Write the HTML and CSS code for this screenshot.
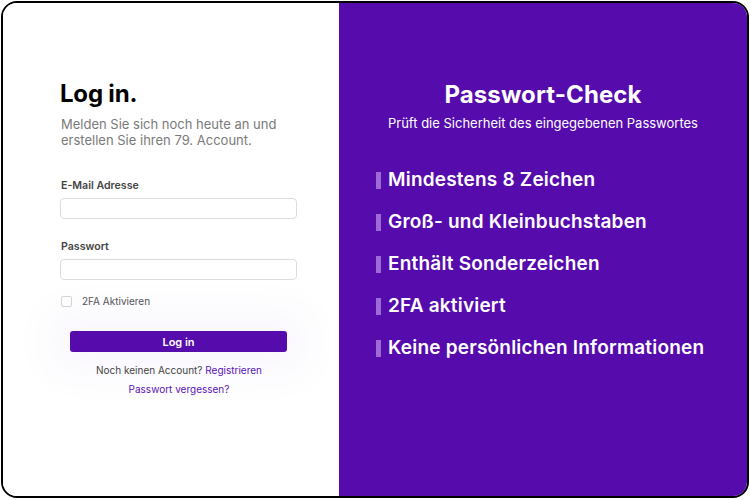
FILE: index.html
```html
<!DOCTYPE html>
<html lang="de">
<head>
<meta charset="utf-8">
<title>Log in</title>
<link rel="stylesheet" href="styles.css">
</head>
<body>
<div class="frame">
  <section class="left">
    <h1 class="title">Log in.</h1>
    <p class="intro">Melden Sie sich noch heute an und erstellen Sie ihren 79. Account.</p>
    <label class="label label-first">E-Mail Adresse</label>
    <input class="field" type="text">
    <label class="label label-second">Passwort</label>
    <input class="field" type="password">
    <div class="check-row">
      <span class="checkbox"></span>
      <span class="check-label">2FA Aktivieren</span>
    </div>
    <button class="btn">Log in</button>
    <p class="links">Noch keinen Account? <a class="link">Registrieren</a></p>
    <p class="links links-second"><a class="link">Passwort vergessen?</a></p>
  </section>
  <section class="right">
    <h2 class="check-title">Passwort-Check</h2>
    <p class="check-sub">Prüft die Sicherheit des eingegebenen Passwortes</p>
    <ul class="rules">
      <li class="rule"><span class="bar"></span>Mindestens 8 Zeichen</li>
      <li class="rule"><span class="bar"></span>Groß- und Kleinbuchstaben</li>
      <li class="rule"><span class="bar"></span>Enthält Sonderzeichen</li>
      <li class="rule"><span class="bar"></span>2FA aktiviert</li>
      <li class="rule"><span class="bar"></span>Keine persönlichen Informationen</li>
    </ul>
  </section>
</div>
</body>
</html>
```

FILE: styles.css
```css
* { box-sizing: border-box; }
html, body { margin: 0; padding: 0; background: #fff; }
body { font-family: Inter, "Noto Sans", sans-serif; }

.frame {
  margin: 1px 1px 0 1px;
  width: 748px;
  height: 497px;
  border: 2px solid #000;
  border-radius: 16px;
  overflow: hidden;
  display: flex;
}

.left {
  width: 336px;
  flex: none;
  background: #fff;
  padding: 76px 0 0 57px;
  display: flex;
  flex-direction: column;
  align-items: flex-start;
}
.left > * { width: 237px; }

.title {
  margin: 0;
  font-size: 24px;
  line-height: 30px;
  font-weight: 700;
  color: #000;
  letter-spacing: -0.2px;
}
.intro {
  margin: 7px 0 0 1px;
  font-size: 13px;
  line-height: 16px;
  color: #7a7a7a;
  width: 230px;
}
.label {
  display: block;
  font-size: 10.6px;
  line-height: 14px;
  font-weight: 600;
  color: #444;
  margin-left: 1px;
}
.label-first { margin-top: 31px; }
.label-second { margin-top: 21px; }
.field {
  margin: 5px 0 0 0;
  height: 21px;
  border: 1px solid #dcdcdc;
  border-radius: 4px;
  background: #fff;
  padding: 0 6px;
}
.check-row {
  margin-top: 15px;
  display: flex;
  align-items: center;
  gap: 10px;
  height: 12px;
  margin-left: 1px;
}
.checkbox {
  width: 11px;
  height: 11px;
  border: 1px solid #d6d6d6;
  border-radius: 2px;
  flex: none;
}
.check-label {
  font-size: 10px;
  color: #555;
}
.btn {
  margin: 24px 0 0 10px;
  width: 217px;
  height: 21px;
  border: none;
  border-radius: 3px;
  background: #560bad;
  color: #fff;
  font-family: inherit;
  font-size: 11px;
  font-weight: 600;
  box-shadow: 0 0 40px 22px rgba(86, 11, 173, 0.035);
  padding: 0;
}
.links {
  margin: 12px 0 0 0;
  font-size: 10px;
  line-height: 13px;
  color: #444;
  text-align: center;
  padding-left: 1px;
}
.links-second { margin-top: 6px; }
.link { color: #5a12b8; }

.right {
  flex: 1;
  background: #560bad;
  color: #fff;
  padding: 78px 0 0 0;
}
.check-title {
  margin: 0;
  text-align: center;
  font-size: 24px;
  line-height: 28px;
  font-weight: 700;
  letter-spacing: 0.1px;
}
.check-sub {
  margin: 7px 0 0 0;
  text-align: center;
  font-size: 13px;
  line-height: 15px;
}
.rules {
  list-style: none;
  margin: 38px 0 0 0;
  padding: 0 0 0 37px;
  display: flex;
  flex-direction: column;
  gap: 20px;
}
.rule {
  display: flex;
  align-items: center;
  gap: 7px;
  font-size: 19px;
  line-height: 22px;
  font-weight: 600;
  letter-spacing: 0.2px;
}
.bar {
  width: 5px;
  height: 17px;
  background: #9d6ad6;
  flex: none;
}
```
